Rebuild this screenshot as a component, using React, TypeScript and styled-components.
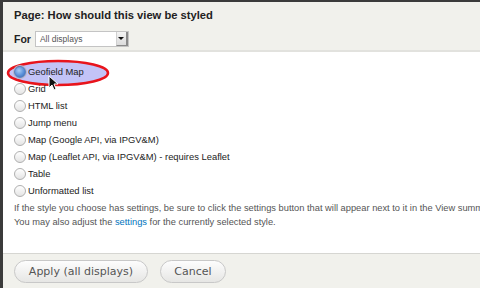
import React from 'react';
import styled, { createGlobalStyle } from 'styled-components';

const GlobalStyle = createGlobalStyle`
  html, body {
    margin: 0;
    padding: 0;
    background: #3b3b3b;
    overflow: hidden;
  }
`;

const Dialog = styled.div`
  margin: 2px 0 0 3px;
  width: 477px;
  height: 286px;
  background: #FFFFFF;
  display: flex;
  flex-direction: column;
  overflow: hidden;
  font-family: "Liberation Sans", Arial, sans-serif;
  color: #222;
`;

const Header = styled.div`
  height: 50px;
  box-sizing: border-box;
  background: #F1F1EC;
  border-bottom: 2px solid #E2E2DE;
  padding: 5px 0 0 11px;
  display: flex;
  flex-direction: column;
  gap: 8px;
`;

const Title = styled.h1`
  margin: 0;
  font-size: 11.2px;
  line-height: 16px;
  font-weight: 700;
  color: #222;
`;

const ForRow = styled.div`
  display: flex;
  align-items: center;
  gap: 4px;
`;

const ForLabel = styled.span`
  font-size: 10.5px;
  font-weight: 700;
  color: #222;
`;

const Select = styled.div`
  width: 94px;
  height: 16px;
  box-sizing: border-box;
  border: 1px solid #C4C4C4;
  background: #FFFFFF;
  display: flex;
  align-items: stretch;
`;

const SelectText = styled.span`
  flex: 1;
  font-size: 8.5px;
  line-height: 14px;
  padding-left: 4px;
  color: #555;
`;

const SelectButton = styled.span`
  width: 9px;
  background: linear-gradient(#F4F4F4, #DCDCDC);
  border-left: 1px solid #D0D0D0;
  border-right: 2px solid #8A8A8A;
  border-bottom: 1px solid #8A8A8A;
  display: flex;
  align-items: center;
  justify-content: center;
`;

const Arrow = styled.span`
  width: 0;
  height: 0;
  border-left: 3px solid transparent;
  border-right: 3px solid transparent;
  border-top: 3px solid #111;
`;

const Content = styled.div`
  position: relative;
  flex: 1;
  padding: 11px 0 0 11px;
`;

const RadioList = styled.div`
  display: flex;
  flex-direction: column;
`;

const Option = styled.label`
  position: relative;
  z-index: 1;
  height: 17px;
  display: flex;
  align-items: center;
  gap: 2px;
  font-size: 9.4px;
  color: #222;
`;

const Radio = styled.span<{ checked?: boolean }>`
  width: 10px;
  height: 10px;
  border-radius: 50%;
  border: 1px solid ${p => (p.checked ? '#5B7FB8' : '#B0B0B0')};
  background: ${p =>
    p.checked
      ? 'radial-gradient(circle at 40% 35%, #A8CCF4 0%, #5A90DA 55%, #3465AE 100%)'
      : 'linear-gradient(#FFFFFF, #E4E4E4)'};
  box-shadow: ${p => (p.checked ? '0 0 0 1px #B8B8C8' : 'none')};
`;

const Help = styled.p<{ first?: boolean }>`
  margin: ${p => (p.first ? '2px' : '0')} 0 0;
  font-size: 9.3px;
  line-height: 14px;
  color: #555;
  white-space: nowrap;
`;

const Link = styled.a`
  color: #0074BD;
  text-decoration: none;
`;

const Highlight = styled.svg`
  position: absolute;
  left: 3px;
  top: 7px;
  pointer-events: none;
`;

const Cursor = styled.svg`
  position: absolute;
  left: 45px;
  top: 23px;
  z-index: 2;
  pointer-events: none;
`;

const Footer = styled.div`
  height: 35px;
  box-sizing: border-box;
  background: #F1F1EC;
  border-top: 1px solid #D6D6D2;
  padding: 6px 0 0 11px;
  display: flex;
  gap: 12px;
`;

const Button = styled.button<{ w: number }>`
  width: ${p => p.w}px;
  height: 23px;
  border-radius: 12px;
  border: 1px solid #C8C8C8;
  background: linear-gradient(#FDFDFD, #E6E6E4);
  font-family: "DejaVu Sans", Verdana, sans-serif;
  font-size: 11px;
  color: #555;
  padding: 0;
`;

const options = [
  'Geofield Map',
  'Grid',
  'HTML list',
  'Jump menu',
  'Map (Google API, via IPGV&M)',
  'Map (Leaflet API, via IPGV&M) - requires Leaflet',
  'Table',
  'Unformatted list',
];

export default function App() {
  return (
    <>
      <GlobalStyle />
      <Dialog>
        <Header>
          <Title>Page: How should this view be styled</Title>
          <ForRow>
            <ForLabel>For</ForLabel>
            <Select>
              <SelectText>All displays</SelectText>
              <SelectButton>
                <Arrow />
              </SelectButton>
            </Select>
          </ForRow>
        </Header>
        <Content>
          <Highlight width="104" height="28" viewBox="0 0 104 28">
            <ellipse cx="52" cy="14" rx="50" ry="12" fill="#C3C3F7" stroke="#E8141C" strokeWidth="2.5" />
          </Highlight>
          <RadioList>
            {options.map((o, i) => (
              <Option key={o}>
                <Radio checked={i === 0} />
                {o}
              </Option>
            ))}
          </RadioList>
          <Help first>
            If the style you choose has settings, be sure to click the settings button that will appear next to it in the View summ
          </Help>
          <Help>
            You may also adjust the <Link href="#">settings</Link> for the currently selected style.
          </Help>
          <Cursor width="10" height="16" viewBox="0 0 10 16">
            <path d="M1 1 L1 13 L4 10 L6 15 L8 14 L6 9 L10 9 Z" fill="#111" stroke="#FFF" strokeWidth="1" />
          </Cursor>
        </Content>
        <Footer>
          <Button w={134}>Apply (all displays)</Button>
          <Button w={66}>Cancel</Button>
        </Footer>
      </Dialog>
    </>
  );
}
